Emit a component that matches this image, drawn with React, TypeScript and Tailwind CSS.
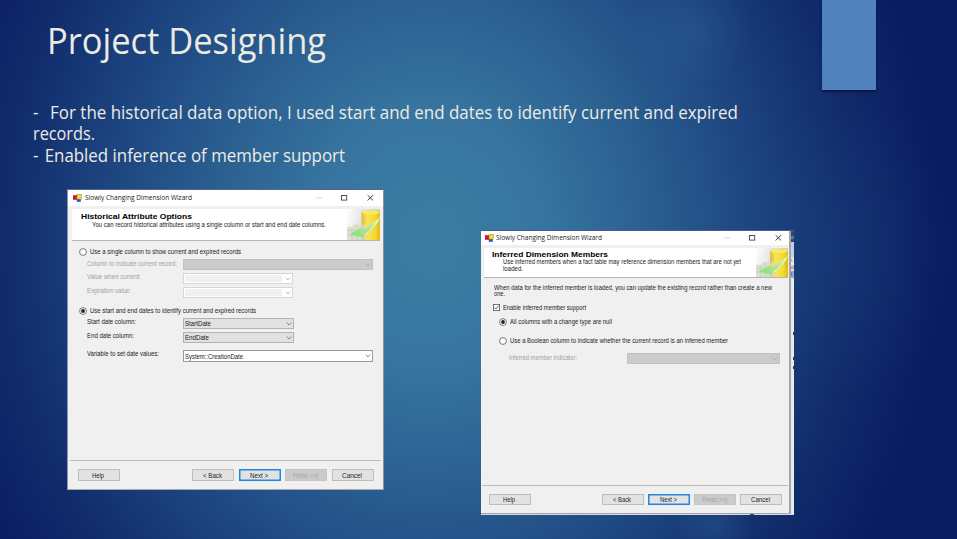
import { useLayoutEffect, useRef } from "react";
import type { ReactNode } from "react";
import clsx from "clsx";

/* One line of text, condensed or widened to fill the width its class gives. */
function Fit({ className, children }: { className: string; children: ReactNode }) {
  const box = useRef<HTMLDivElement>(null);
  const inner = useRef<HTMLSpanElement>(null);
  useLayoutEffect(() => {
    const outerEl = box.current;
    const innerEl = inner.current;
    if (!outerEl || !innerEl) return;
    const fit = () => {
      const natural = parseFloat(getComputedStyle(innerEl).width);
      if (natural > 0) innerEl.style.transform = `scaleX(${outerEl.clientWidth / natural})`;
    };
    fit();
    const observer = new ResizeObserver(fit);
    observer.observe(outerEl);
    observer.observe(innerEl);
    document.fonts.ready.then(fit);
    return () => observer.disconnect();
  }, []);
  return (
    <div ref={box} className={clsx("shrink-0 whitespace-pre", className)}>
      <span ref={inner} className="inline-block origin-left">
        {children}
      </span>
    </div>
  );
}

function AppIcon() {
  return (
    <svg className="h-[9px] w-[9px] shrink-0" viewBox="0 0 9 9">
      <rect x="0" y="1.2" width="4.2" height="4.6" fill="#d3123c" />
      <rect x="3.8" y="4" width="4" height="3.8" fill="#2b50d8" />
      <rect x="4" y="0.3" width="4.6" height="4.8" fill="#f7df28" stroke="#8d8a35" strokeWidth="0.5" />
    </svg>
  );
}

function WindowControls() {
  return (
    <svg className="h-[10px] w-[60px] shrink-0" viewBox="0 0 60 10" fill="none">
      <path d="M1 5h6" stroke="#d2d2d2" strokeWidth="0.9" />
      <rect x="26.5" y="2.5" width="5.2" height="4.6" stroke="#444" strokeWidth="0.9" />
      <path d="M52.6 2.2l5.4 5.2M58 2.2l-5.4 5.2" stroke="#333" strokeWidth="0.95" />
    </svg>
  );
}

function DatabaseArt({ id, className }: { id: string; className: string }) {
  return (
    <svg className={clsx("shrink-0", className)} viewBox="0 0 33 31" preserveAspectRatio="none">
      <defs>
        <linearGradient id={`${id}-bg`} x1="0" y1="0" x2="1" y2="0.25">
          <stop offset="0" stopColor="#fff" />
          <stop offset="0.6" stopColor="#dedede" />
          <stop offset="1" stopColor="#cfcdbd" />
        </linearGradient>
        <linearGradient id={`${id}-can`} x1="0" y1="0" x2="1" y2="0">
          <stop offset="0" stopColor="#dcba3a" />
          <stop offset="0.3" stopColor="#f8e45c" />
          <stop offset="0.75" stopColor="#f4d92c" />
          <stop offset="1" stopColor="#d9b91c" />
        </linearGradient>
        <linearGradient id={`${id}-arrow`} x1="1" y1="0" x2="0" y2="1">
          <stop offset="0" stopColor="#e6f1bc" />
          <stop offset="0.5" stopColor="#a8e594" />
          <stop offset="1" stopColor="#7be272" />
        </linearGradient>
      </defs>
      <rect width="33" height="31" fill={`url(#${id}-bg)`} />
      <path d="M14.5 3.5C14.5 .6 33 .6 33 3.5V31H14.5z" fill={`url(#${id}-can)`} />
      <ellipse cx="23.7" cy="3.3" rx="9" ry="2" fill="#f9ea5c" />
      <path d="M0 18h6v-2.5h13V31H0z" fill="#d8dbc4" fillOpacity="0.8" />
      <path d="M0 21.5h20M0 26h20M5 18v13M10 16v15M15 16v15" stroke="#bcc0ac" strokeWidth="0.5" />
      <path d="M31 10L17 20.5l-4-1.5L2.5 25.5l14.5 3-0.5-3.5C24 22 29 17 32 11z" fill={`url(#${id}-arrow)`} />
      <path d="M33 7.5C29 15 24 22 17.5 26.5" fill="none" stroke="#fff" strokeOpacity="0.65" strokeWidth="0.9" />
    </svg>
  );
}

function Radio({ checked = false }: { checked?: boolean }) {
  return (
    <svg className="h-[8px] w-[8px] shrink-0" viewBox="0 0 8 8">
      <circle cx="4" cy="4" r="3.4" fill="#fff" stroke="#555" strokeWidth="0.8" />
      {checked && <circle cx="4" cy="4" r="1.9" fill="#222" />}
    </svg>
  );
}

function Combo({ className, look, children }: { className: string; look: "off" | "empty" | "list" | "edit"; children?: ReactNode }) {
  const looks = {
    off: "bg-[#cbcbcb] border-[#c2c2c2]",
    empty: "bg-white border-[#d6d6d6]",
    list: "bg-[#e1e1e1] border-[#b3b3b3]",
    edit: "bg-white border-[#9b9b9b]",
  };
  const pale = look === "off" || look === "empty";
  return (
    <div className={clsx("flex shrink-0 items-center justify-between border pr-px pl-[1px]", looks[look], className)}>
      {look === "empty" ? <div className="h-[7px] w-[97px] bg-[#f0f0f0]" /> : <div>{children}</div>}
      <svg className="h-[4px] w-[6px] shrink-0" viewBox="0 0 6 4" fill="none">
        <path d="M0.7 0.6L3 2.9 5.3 0.6" stroke={pale ? "#a4a4a4" : "#666"} strokeWidth="0.8" />
      </svg>
    </div>
  );
}

function Button({ className, textWidth, look = "plain", children }: { className: string; textWidth: string; look?: "plain" | "default" | "off"; children: ReactNode }) {
  const looks = {
    plain: "border border-[#bdbdbd] bg-[#e2e2e2]",
    default: "border border-[#2287dc] bg-[#e2e2e2] shadow-[inset_0_0_0_0.5px_#2287dc]",
    off: "border border-[#c5c5c5] bg-[#cbcbcb] text-[#a3a3a3]",
  };
  return (
    <button className={clsx("flex shrink-0 items-center justify-center pr-[2px]", looks[look], className)}>
      <Fit className={textWidth}>{children}</Fit>
    </button>
  );
}

function HistoricalDialog() {
  return (
    <section className="ml-[67px] flex h-[301px] w-[317px] shrink-0 flex-col border border-t-[#56658c] border-r-[#8593a4] border-b-[#a8a8a8] border-l-[#8d95a5] bg-[#f0f0f0]">
      <div className="flex h-[16px] items-center bg-white pl-[5px]">
        <AppIcon />
        <Fit className="ml-[3px] w-[107px] font-['Open_Sans',sans-serif] text-[6.6px] leading-[10px] text-[#222]">Slowly Changing Dimension Wizard</Fit>
        <div className="ml-[123px]"><WindowControls /></div>
      </div>
      <div className="mt-[3px] ml-[4px] flex h-[32px] w-[308px] justify-between border-b border-[#b5b5b5] bg-white">
        <div className="pt-[2.5px] pl-[9px]">
          <Fit className="w-[111px] text-[7.6px] leading-[9px] font-bold text-black">Historical Attribute Options</Fit>
          <Fit className="ml-[11px] w-[234px] leading-[8px]">You can record historical attributes using a single column or start and end date columns.</Fit>
        </div>
        <DatabaseArt id="historical" className="h-[31px] w-[33px]" />
      </div>
      <div className="mt-[6px] ml-[11px] flex h-[9px] items-center">
        <Radio />
        <Fit className="ml-[3px] w-[151px]">Use a single column to show current and expired records</Fit>
      </div>
      <div className="mt-[3px] ml-[19px] flex h-[12px] items-start text-[#a0a0a0]">
        <Fit className="mr-[6px] w-[90px]">Column to indicate current record:</Fit>
        <Combo look="off" className="h-[11px] w-[190px]" />
      </div>
      <div className="mt-[2px] ml-[19px] flex h-[12px] items-start text-[#a0a0a0]">
        <Fit className="mr-[42px] w-[54px] leading-[8px]">Value when current:</Fit>
        <Combo look="empty" className="h-[11px] w-[110px]" />
      </div>
      <div className="mt-[2px] ml-[19px] flex h-[12px] items-start text-[#a0a0a0]">
        <Fit className="mr-[52px] w-[44px] leading-[8px]">Expiration value:</Fit>
        <Combo look="empty" className="h-[11px] w-[110px]" />
      </div>
      <div className="mt-[7px] ml-[11px] flex h-[9px] items-center">
        <Radio checked />
        <Fit className="ml-[3px] w-[166px]">Use start and end dates to identify current and expired records</Fit>
      </div>
      <div className="mt-[3px] ml-[19px] flex h-[12px] items-start">
        <Fit className="mr-[47px] w-[49px] leading-[7px]">Start date column:</Fit>
        <Combo look="list" className="h-[11px] w-[111px]"><Fit className="w-[26px]">StartDate</Fit></Combo>
      </div>
      <div className="mt-[2px] ml-[19px] flex h-[12px] items-start">
        <Fit className="mr-[49px] w-[47px] leading-[7px]">End date column:</Fit>
        <Combo look="list" className="h-[11px] w-[111px]"><Fit className="w-[24px]">EndDate</Fit></Combo>
      </div>
      <div className="mt-[6px] ml-[19px] flex h-[12px] items-start">
        <Fit className="mr-[24px] w-[72px] leading-[8px]">Variable to set date values:</Fit>
        <Combo look="edit" className="h-[12px] w-[190px]"><Fit className="w-[58px]">System::CreationDate</Fit></Combo>
      </div>
      <div className="mx-[2px] mt-auto h-px shrink-0 bg-[#bababa]" />
      <div className="mt-[8px] mb-[7px] ml-[10px] flex h-[13px] shrink-0 pb-px">
        <Button className="mr-[72px] w-[42px]" textWidth="w-[12px]">Help</Button>
        <Button className="mr-[5px] w-[42px]" textWidth="w-[19px]">&lt; Back</Button>
        <Button className="mr-[4px] w-[42px]" textWidth="w-[18px]" look="default">Next &gt;</Button>
        <Button className="mr-[5px] w-[42px]" textWidth="w-[25px]" look="off">Finish &gt;&gt;|</Button>
        <Button className="w-[42px]" textWidth="w-[20px]">Cancel</Button>
      </div>
    </section>
  );
}

/* Sliver of the window that sits behind the dialog's right edge. */
function BackgroundSliver() {
  return (
    <div className="flex w-[3px] shrink-0 flex-col overflow-hidden bg-[#e9ebef] text-[5px] leading-[6px]">
      <div className="h-[11px] shrink-0 bg-[#34456f] pt-[3px] text-[#b4bed2]">o</div>
      <div className="h-[15px] shrink-0 bg-[#c8d0df]" />
      <div className="h-[7px] shrink-0 bg-[#efe9dc] text-[#777]">t</div>
      <div className="h-[7px] shrink-0 bg-[#e5e0dc] text-[#704040]">o</div>
      <div className="h-[7px] shrink-0 bg-[#98a9c2] text-[#333]">l</div>
      <div className="mt-[54px] ml-[2px] h-[3px] w-px shrink-0 bg-[#333]" />
      <div className="mt-[22px] ml-[2px] h-[3px] w-px shrink-0 bg-[#333]" />
      <div className="mt-[6px] ml-[2px] h-[3px] w-px shrink-0 bg-[#333]" />
    </div>
  );
}

function InferredDialog() {
  return (
    <section className="mt-[41px] ml-[97px] flex h-[285px] w-[313px] shrink-0 flex-col">
      <div className="flex h-[284px] border-t border-[#4b5d88]">
        <div className="flex w-[310px] shrink-0 flex-col border-r-2 border-b border-[#a2a5ab] bg-[#f0f0f0]">
          <div className="flex h-[14px] shrink-0 items-center bg-white pl-[4px]">
            <AppIcon />
            <Fit className="ml-[2px] w-[106px] font-['Open_Sans',sans-serif] text-[6.4px] leading-[10px] text-[#222]">Slowly Changing Dimension Wizard</Fit>
            <div className="ml-[121px]"><WindowControls /></div>
          </div>
          <div className="mt-[3px] ml-[3px] flex h-[30px] w-[304px] shrink-0 justify-between border-b border-[#b5b5b5] bg-white">
            <div className="pt-[3px] pl-[8px]">
              <Fit className="w-[116px] text-[7.3px] leading-[8px] font-bold text-black">Inferred Dimension Members</Fit>
              <Fit className="ml-[11px] w-[238px] leading-[6px]">Use inferred members when a fact table may reference dimension members that are not yet</Fit>
              <Fit className="ml-[11px] w-[20px] leading-[7px]">loaded.</Fit>
            </div>
            <DatabaseArt id="inferred" className="h-[29px] w-[32px]" />
          </div>
          <div className="mt-[6px] ml-[13px]">
            <Fit className="w-[278px] leading-[7px]">When data for the inferred member is loaded, you can update the existing record rather than create a new</Fit>
            <Fit className="w-[11px] leading-[6px]">one.</Fit>
          </div>
          <div className="mt-[6px] ml-[12px] flex h-[9px] items-center">
            <svg className="h-[7px] w-[7px] shrink-0" viewBox="0 0 7 7" fill="none">
              <rect x="0.4" y="0.4" width="6.2" height="6.2" fill="#fff" stroke="#555" strokeWidth="0.8" />
              <path d="M1.4 3.5l1.5 1.5L5.7 1.7" stroke="#333" strokeWidth="0.8" />
            </svg>
            <Fit className="ml-[3px] w-[83px]">Enable inferred member support</Fit>
          </div>
          <div className="mt-[5px] ml-[18px] flex h-[9px] items-center">
            <Radio checked />
            <Fit className="ml-[3px] w-[102px]">All columns with a change type are null</Fit>
          </div>
          <div className="mt-[10px] ml-[18px] flex h-[9px] items-center">
            <Radio />
            <Fit className="ml-[3px] w-[218px]">Use a Boolean column to indicate whether the current record is an inferred member</Fit>
          </div>
          <div className="mt-[8px] ml-[28px] flex h-[11px] items-start text-[#a0a0a0]">
            <Fit className="mr-[50px] w-[68px] leading-[10px]">Inferred member indicator:</Fit>
            <Combo look="off" className="h-[11px] w-[153px]" />
          </div>
          <div className="mr-[1px] ml-[1px] mt-auto h-px shrink-0 bg-[#bababa]" />
          <div className="mt-[8px] mb-[8px] ml-[8px] flex h-[11px] shrink-0">
            <Button className="mr-[71px] w-[42px]" textWidth="w-[12px]">Help</Button>
            <Button className="mr-[4px] w-[42px]" textWidth="w-[18px]">&lt; Back</Button>
            <Button className="mr-[4px] w-[42px]" textWidth="w-[17px]" look="default">Next &gt;</Button>
            <Button className="mr-[4px] w-[42px]" textWidth="w-[25px]" look="off">Finish &gt;&gt;|</Button>
            <Button className="w-[42px]" textWidth="w-[19px]">Cancel</Button>
          </div>
        </div>
        <BackgroundSliver />
      </div>
      <div className="h-px bg-[#d9dce2]">
        <div className="ml-[269px] h-px w-[4px] bg-[#2e3f66]" />
      </div>
    </section>
  );
}

export default function App() {
  return (
    <main className="h-[539px] w-[957px] overflow-hidden bg-[radial-gradient(circle_62px_at_690px_28px,rgba(56,113,158,0.25),transparent),radial-gradient(circle_40px_at_715px_525px,rgba(56,113,168,0.25),transparent),radial-gradient(ellipse_110px_150px_at_850px_250px,rgba(40,90,150,0.14),transparent),radial-gradient(ellipse_510px_580px_at_430px_240px,#3b7ea3_0%,#3775a0_22%,#2b6091_42%,#1e4782_62%,#112c6c_83%,#091d61_100%)] font-['Open_Sans',sans-serif] text-[#ecebe3]">
      <header className="flex h-[100px] items-start">
        <h1 className="ml-[47px] w-[775px] pt-[15px]">
          <Fit className="w-[279px] text-[36.5px] leading-[50px]">Project Designing</Fit>
        </h1>
        <div className="h-[90px] w-[54px] bg-[#5082bd] shadow-[0_2px_2px_rgba(4,12,45,0.65)]" />
      </header>
      <div className="ml-[33px] h-[89px] pt-[2px] text-[18px] leading-[21px]">
        <Fit className="w-[705px]"><span className="tracking-[1px]">{"-  "}</span>For the historical data option, I used start and end dates to identify current and expired</Fit>
        <Fit className="w-[62px]">records.</Fit>
        <Fit className="w-[312px] pt-px"><span className="tracking-[1px]">{"- "}</span>Enabled inference of member support</Fit>
      </div>
      <div className="flex items-start font-['Liberation_Sans',Arial,sans-serif] text-[6.3px] leading-[9px] text-[#222]">
        <HistoricalDialog />
        <InferredDialog />
      </div>
    </main>
  );
}
